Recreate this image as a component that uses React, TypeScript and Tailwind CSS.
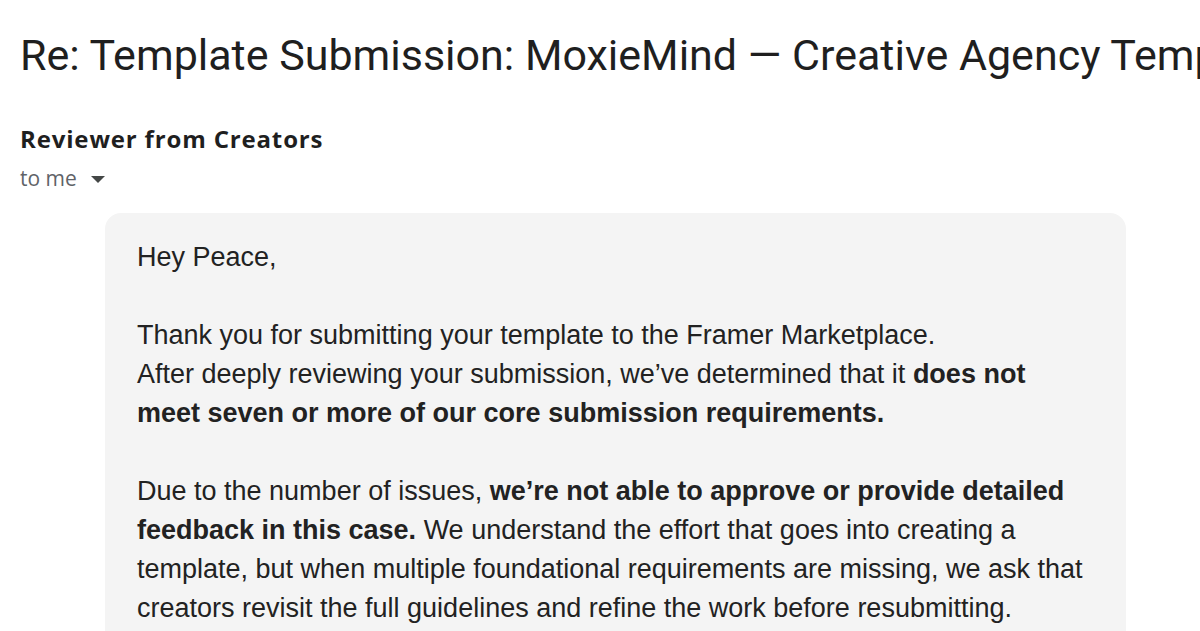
import React from 'react';

const sans = { fontFamily: 'Roboto, "Noto Sans", sans-serif' };
const open = { fontFamily: '"Open Sans", Roboto, sans-serif' };
const body = { fontFamily: '"Liberation Sans", Arial, sans-serif' };

export default function App() {
  return (
    <div className="w-[1200px] h-[631px] overflow-hidden bg-white">
      <h1 className="pl-5 pt-[27px] text-[43px] leading-[56px] font-normal text-[#1f1f1f] whitespace-nowrap" style={sans}>
        Re: Template Submission: MoxieMind — Creative Agency Template
      </h1>
      <div className="pl-5 mt-[40px]" style={open}>
        <div className="text-[24px] leading-[32px] font-bold tracking-[0.035em] text-[#1f1f1f]">Reviewer from Creators</div>
        <div className="flex items-center gap-[14px] mt-[9px] text-[21px] leading-[28px] text-[#5f6368]">
          <span>to me</span>
          <svg width="14" height="7" viewBox="0 0 14 7" className="mt-[2px]">
            <path d="M0 0h14L7 7z" fill="#444746" />
          </svg>
        </div>
      </div>
      <div className="ml-[105px] mt-[21px] w-[1021px] rounded-[16px] bg-[#f4f4f4] pl-8 pr-[38px] pt-[25px] pb-8 text-[27px] leading-[39px] text-[#222222]" style={body}>
        <p>Hey Peace,</p>
        <p className="mt-[39px]">
          Thank you for submitting your template to the Framer Marketplace.
          <br />
          After deeply reviewing your submission, we’ve determined that it <b>does not meet seven or more of our core submission requirements.</b>
        </p>
        <p className="mt-[39px]">
          Due to the number of issues, <b>we’re not able to approve or provide detailed feedback in this case.</b> We understand the effort that goes into creating a template, but when multiple foundational requirements are missing, we ask that creators revisit the full guidelines and refine the work before resubmitting.
        </p>
      </div>
    </div>
  );
}
